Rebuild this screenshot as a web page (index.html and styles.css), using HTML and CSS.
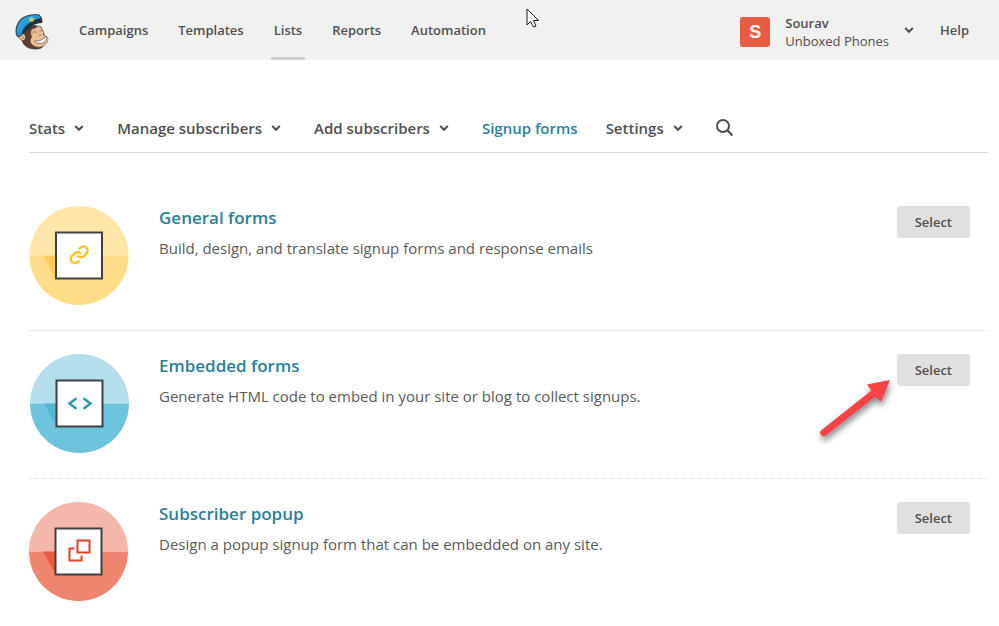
FILE: index.html
```html
<!DOCTYPE html>
<html lang="en">
<head>
<meta charset="utf-8">
<title>Signup forms</title>
<link rel="stylesheet" href="styles.css">
</head>
<body>
<svg class="defs" aria-hidden="true">
  <symbol id="caret" viewBox="0 0 10 8"><path d="M1.200 2 5 5.800 8.800 2" fill="none" stroke="currentColor" stroke-width="2"/></symbol>
</svg>
<header class="topbar">
  <a class="logo" href="#" aria-label="Home">
    <svg viewBox="0 0 36 36" width="36" height="36">
      <path d="M8 15C7 20 7 28 11 31.500C15 35.500 24 36 28 33.500L33 27 27 13 19 11Z" fill="#5a3b36" stroke="#47302d" stroke-width=".7"/>
      <path d="M25 12C28 14 30 17 29.500 21L33.500 23.500C35 25.500 33.500 29 30 31.500C26 34.500 20 33 17.500 30C15.500 27.500 16 25 18 23C15.500 19 17 14.500 20 14.500C22 14.500 23 12 25 12Z" fill="#e9c095" stroke="#72483a" stroke-width=".5"/>
      <path d="M5.500 18.500C8.500 17.500 11.500 20 11.500 23.500C11.500 26.500 8.500 27.500 6.500 25.500C4 23.500 3.500 19.500 5.500 18.500Z" fill="#e9c095" stroke="#72483a" stroke-width=".9"/>
      <path d="M7 21.500C9 21.500 9.500 23 9 25" fill="none" stroke="#ad7860"/>
      <path d="M20.500 27C25 27.500 30 25 32.500 22C33.500 25 31 29 27.500 29.500C24 30 21.500 29 20.500 27Z" fill="#fff" stroke="#855447" stroke-width=".8"/>
      <path d="M24 29.500 24.500 27M28 29 27.700 26.500" stroke="#c8bbb4" stroke-width=".5"/>
      <path d="M18.500 19.500C20 17 22 17 22.500 19M26 17.500C27 15.500 28.500 16 29 17.500M25 21.500 27 20.700" fill="none" stroke="#9a6a50" stroke-width="1"/>
      <path d="M3 22C1 18 2 10 7 5C12 1 21 0 25 1C27 2 28 5 28 8C20 7 11 13 8 20C7 22 5 23 3 22Z" fill="#2795cf" stroke="#263342" stroke-width="1"/>
      <path d="M5 17C6 10 12 5.500 20 3.500" fill="none" stroke="#2f9fda" stroke-width="4"/>
      <path d="M9.500 15C13 9.500 19 6 27 4L28 9C24 9 20 10 17 13L9 20.500C7.500 19 8 17 9.500 15Z" fill="#22303c"/>
      <path d="m14.500 4 2 .5 1.500-2 .5 2 2.500 0-2 1.500.5 2-2-1-1.500 1.500 0-2Z" fill="#f2c84b"/>
    </svg>
  </a>
  <nav class="main-nav" aria-label="Main">
    <a href="#">Campaigns</a>
    <a href="#">Templates</a>
    <a class="current" href="#">Lists</a>
    <a href="#">Reports</a>
    <a href="#">Automation</a>
  </nav>
  <button class="account" type="button">
    <span class="avatar">S</span>
    <span class="who"><strong>Sourav</strong><span>Unboxed Phones</span></span>
    <svg class="caret"><use href="#caret"/></svg>
  </button>
  <a class="help" href="#">Help</a>
  <svg class="cursor" viewBox="0 0 14 20" width="14" height="20" aria-hidden="true"><path d="M1 1V17L4.500 13.500 7.500 19 10 18 7.500 12.500H12.500Z" fill="#fff" stroke="#1b1b2b"/></svg>
</header>
<main class="page">
  <nav class="tabs" aria-label="List">
    <button class="drop" type="button">Stats <svg class="caret"><use href="#caret"/></svg></button>
    <button class="drop" type="button">Manage subscribers <svg class="caret"><use href="#caret"/></svg></button>
    <button class="drop" type="button">Add subscribers <svg class="caret"><use href="#caret"/></svg></button>
    <a class="active" href="#">Signup forms</a>
    <button class="drop" type="button">Settings <svg class="caret"><use href="#caret"/></svg></button>
    <button class="search" type="button" aria-label="Search"><svg viewBox="0 0 18 18" width="18" height="18"><circle cx="7" cy="7" r="6" fill="none" stroke="currentColor" stroke-width="2"/><path d="m11.500 11.500 5 5" stroke="currentColor" stroke-width="2.200"/></svg></button>
  </nav>
  <ul class="forms">
    <li class="form-row">
      <svg class="badge" viewBox="0 0 100 100" aria-hidden="true">
        <path d="M.5 49.500a49.500 49.500 0 0 1 99 0Z" fill="#fee6a8"/>
        <path d="M.5 49.500a49.500 49.500 0 0 0 99 0Z" fill="#fedd88"/>
        <path d="M14 49.500H27V73Z" fill="#fdcf55"/>
        <rect x="27" y="26.500" width="46" height="46" fill="#fff" stroke="#414144" stroke-width="2"/>
        <g fill="none" stroke="#fdbf2d" stroke-width="2.800" transform="translate(40.100 38.700) scale(.84)">
          <path d="M10 13a5 5 0 0 0 7.540.540l3-3a5 5 0 0 0-7.070-7.070l-1.720 1.710"/>
          <path d="M14 11a5 5 0 0 0-7.540-.540l-3 3a5 5 0 0 0 7.070 7.070l1.710-1.710"/>
        </g>
      </svg>
      <div class="copy"><h2><a href="#">General forms</a></h2><p>Build, design, and translate signup forms and response emails</p></div>
      <div class="action"><button class="select" type="button">Select</button></div>
    </li>
    <li class="form-row">
      <svg class="badge" viewBox="0 0 100 100" aria-hidden="true">
        <path d="M1 49.500a49.500 49.500 0 0 1 99 0Z" fill="#b2dfeb"/>
        <path d="M1 49.500a49.500 49.500 0 0 0 99 0Z" fill="#6cc5dc"/>
        <path d="M15 49.500H28V73Z" fill="#50b6d3"/>
        <rect x="27.500" y="26.500" width="46" height="46" fill="#fff" stroke="#414144" stroke-width="2"/>
        <path d="m47.500 44.200-7 5.300 7 5.300M54.500 44.200l7 5.300-7 5.300" fill="none" stroke="#2c9ab7" stroke-width="2.600"/>
      </svg>
      <div class="copy"><h2><a href="#">Embedded forms</a></h2><p>Generate HTML code to embed in your site or blog to collect signups.</p></div>
      <div class="action">
        <button class="select" type="button">Select</button>
        <svg class="pointer" viewBox="0 0 90 80" width="90" height="80" aria-hidden="true"><path d="M80 10 57 14.500 61.500 20.500 11 60.500A3.500 3.500 0 0 0 15 66L65.500 26.500 71 31.500Z" fill="#fb4245"/></svg>
      </div>
    </li>
    <li class="form-row">
      <svg class="badge" viewBox="0 0 100 100" aria-hidden="true">
        <path d="M0 49.500a49.500 49.500 0 0 1 99 0Z" fill="#f5b6ac"/>
        <path d="M0 49.500a49.500 49.500 0 0 0 99 0Z" fill="#ef846f"/>
        <path d="M14 49.500H27V73Z" fill="#e85c41"/>
        <rect x="26.500" y="26.500" width="46" height="46" fill="#fff" stroke="#414144" stroke-width="2"/>
        <g fill="none" stroke="#e04127" stroke-width="2"><path d="M48.500 38.500h12v12h-12Z"/><path d="M45.500 46.500H40.500v12H52.500V53.500"/></g>
      </svg>
      <div class="copy"><h2><a href="#">Subscriber popup</a></h2><p>Design a popup signup form that can be embedded on any site.</p></div>
      <div class="action"><button class="select" type="button">Select</button></div>
    </li>
  </ul>
</main>
</body>
</html>
```
FILE: styles.css
```css
* { box-sizing: border-box; }

body {
  margin: 0;
  background: #fff;
  color: #5a5a5a;
  font: 15px/20px "Open Sans", sans-serif;
}

a { color: inherit; text-decoration: none; }

button {
  padding: 0;
  border: 0;
  background: none;
  color: inherit;
  font: inherit;
  cursor: pointer;
}

svg { display: block; flex: none; }

.defs { position: absolute; width: 0; height: 0; }

.caret { width: 10px; height: 8px; }

.topbar {
  position: relative;
  display: flex;
  align-items: center;
  height: 60px;
  padding: 0 30px 0 14px;
  background: #f1f1f1;
  color: #505050;
  font-size: 13px;
  font-weight: 600;
}

.logo { padding-top: 3px; }

.main-nav {
  display: flex;
  gap: 24px;
  margin-left: 26px;
  align-self: stretch;
}

.main-nav a {
  padding: 20px 3px 17px;
  border-bottom: 3px solid transparent;
}

.main-nav .current { border-color: #cfcfcf; }

.account {
  display: flex;
  align-items: center;
  gap: 15px;
  margin-left: auto;
  text-align: left;
}

.avatar {
  width: 30px;
  height: 30px;
  margin-top: 4px;
  border-radius: 3px;
  background: #e85c41;
  color: #fff;
  font: bold 18px/30px "Liberation Sans", sans-serif;
  text-align: center;
}

.who {
  display: grid;
  padding-top: 4px;
  line-height: 18px;
}

.who strong { font-weight: 600; }
.who span { font-weight: 400; }

.help { margin-left: 26px; }

.cursor {
  position: absolute;
  top: 8px;
  left: 526px;
}

.page { padding: 0 11px 0 29px; }

.tabs {
  display: flex;
  align-items: center;
  gap: 28px;
  padding: 58px 0 14px;
  border-bottom: 1px solid #d8d8d8;
  color: #505050;
  font-weight: 600;
}

.drop {
  display: flex;
  align-items: center;
  gap: 9px;
  padding-right: 5px;
}

.active { color: #2a8099; }

.forms {
  margin: 0;
  padding: 29px 0 0;
  list-style: none;
}

.form-row {
  display: flex;
  align-items: flex-start;
  padding: 24px 18px 24px 0;
}

.form-row + .form-row {
  padding-top: 23px;
  border-top: 1px dotted #d8d8d8;
}

.badge { width: 100px; height: 100px; }

.copy {
  flex: 1;
  margin-left: 30px;
}

h2 {
  margin: 0;
  color: #2a8099;
  font-size: 17px;
  font-weight: 600;
  line-height: 24px;
}

p { margin: 8px 0 0; }

.action { position: relative; }

.select {
  display: block;
  height: 32px;
  padding: 0 18px;
  border-radius: 3px;
  background: #e0e0e0;
  color: #505050;
  font-size: 13px;
  font-weight: 600;
}

.pointer {
  position: absolute;
  top: 16px;
  right: 70px;
  filter: drop-shadow(1px 4px 3px rgba(0, 0, 0, .5));
}
```
